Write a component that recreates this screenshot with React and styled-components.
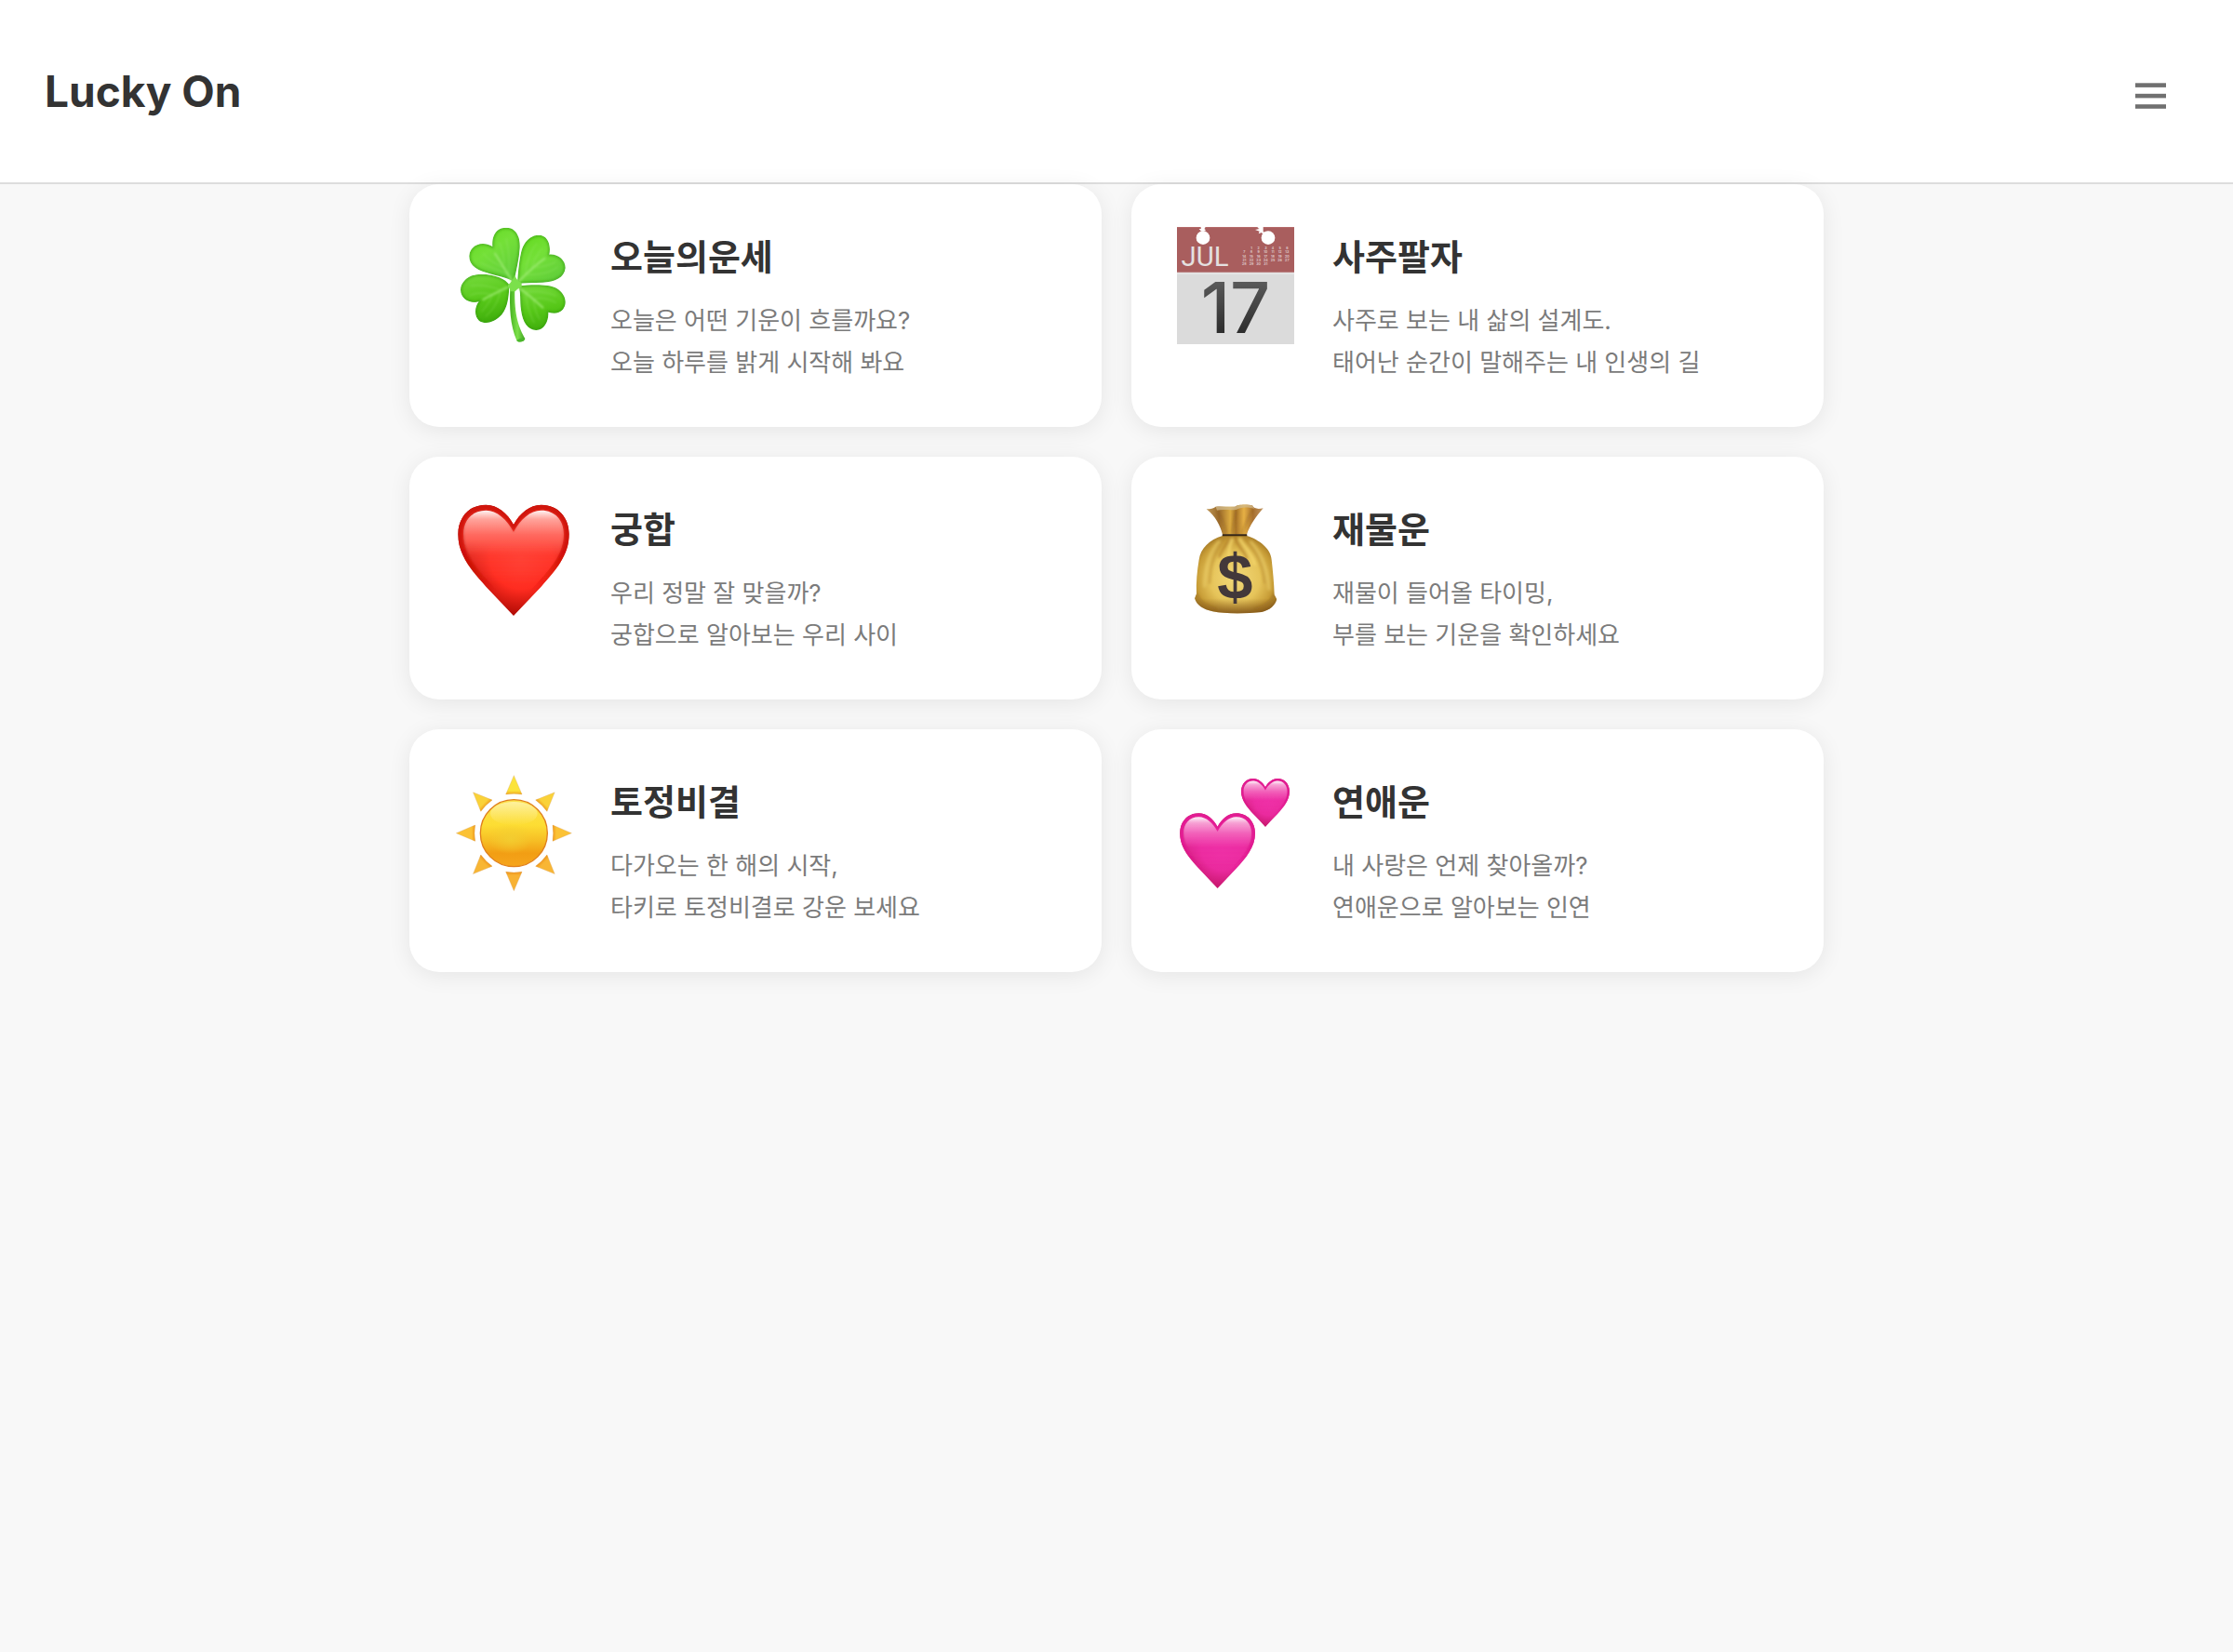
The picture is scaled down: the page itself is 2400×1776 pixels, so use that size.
import React, { useId } from "react";
import styled, { createGlobalStyle } from "styled-components";

const GlobalStyle = createGlobalStyle`
  *, *::before, *::after { box-sizing: border-box; }
  body {
    margin: 0;
    background: #f8f8f8;
    color: #333;
    font-family: Inter, "Noto Sans CJK KR", sans-serif;
  }
`;

const Header = styled.header`
  display: flex;
  align-items: center;
  justify-content: space-between;
  padding: 68px 48px;
  background: #fff;
  border-bottom: 2px solid #ddd;
`;

const Logo = styled.h1`
  margin: 0;
  font-size: 46px;
  font-weight: 700;
  line-height: 60px;
`;

const MenuButton = styled.button`
  display: flex;
  padding: 16px 24px 6px;
  border: 0;
  background: none;
  color: #707070;
  cursor: pointer;
`;

const Grid = styled.main`
  display: grid;
  grid-template-columns: repeat(2, minmax(0, 1fr));
  gap: 32px;
  max-width: 1520px;
  margin: 0 auto;
  padding-bottom: 48px;
`;

const Card = styled.a`
  display: flex;
  align-items: flex-start;
  gap: 40px;
  padding: 44px 48px 47px;
  border-radius: 32px;
  background: #fff;
  box-shadow: 0 4px 24px rgba(0, 0, 0, 0.08);
  color: inherit;
  text-decoration: none;
`;

const Picture = styled.svg`
  flex: none;
  width: 128px;
  height: 128px;
  overflow: visible;
`;

const CardText = styled.div`
  display: flex;
  flex-direction: column;
  gap: 16px;
  padding-top: 4px;
`;

const CardTitle = styled.h2`
  margin: 0;
  font-size: 38px;
  font-weight: 700;
  line-height: 60px;
`;

const CardDescription = styled.p`
  margin: 0;
  color: #7b7b7b;
  font-size: 26px;
  line-height: 45px;
`;

const HEART =
  "M216 102C235 65 270 38 305 38C360 38 395 80 395 133C395 200 352 250 305 302C275 334 245 365 216 396C187 365 157 334 127 302C80 250 37 200 37 133C37 80 72 38 127 38C162 38 197 65 216 102Z";
const HEART_INNER =
  "M216 126C237 86 270 56 305 56C350 56 378 88 378 133C378 190 345 235 298 285C268 316 242 342 216 372C190 342 164 316 134 285C87 235 54 190 54 133C54 88 82 56 127 56C162 56 195 86 216 126Z";

function Heart({ colors, transform }) {
  const id = useId();
  const { core, body, rim, deep, shine } = colors;
  return (
    <g transform={transform}>
      <defs>
        <radialGradient id={`${id}b`} gradientUnits="userSpaceOnUse" cx="240" cy="210" r="200">
          <stop offset="0" stopColor={core} />
          <stop offset="0.5" stopColor={body} />
          <stop offset="1" stopColor={deep} />
        </radialGradient>
        <linearGradient id={`${id}t`} gradientUnits="userSpaceOnUse" x1="0" y1="56" x2="0" y2="290">
          <stop offset="0" stopColor={core} />
          <stop offset="0.4" stopColor={core} />
          <stop offset="1" stopColor={core} stopOpacity="0" />
        </linearGradient>
        <linearGradient id={`${id}s`} gradientUnits="userSpaceOnUse" x1="0" y1="56" x2="0" y2="200">
          <stop offset="0" stopColor="#fff" stopOpacity="0.95" />
          <stop offset="0.2" stopColor={shine} stopOpacity="0.85" />
          <stop offset="0.55" stopColor={shine} stopOpacity="0.35" />
          <stop offset="1" stopColor={shine} stopOpacity="0" />
        </linearGradient>
        <linearGradient id={`${id}r`} gradientUnits="userSpaceOnUse" x1="0" y1="38" x2="0" y2="320">
          <stop offset="0" stopColor={rim} />
          <stop offset="0.5" stopColor={rim} />
          <stop offset="1" stopColor={rim} stopOpacity="0" />
        </linearGradient>
        <clipPath id={`${id}c`}>
          <path d={HEART} />
        </clipPath>
        <filter id={`${id}f`}>
          <feGaussianBlur stdDeviation="2" />
        </filter>
        <filter id={`${id}g`}>
          <feGaussianBlur stdDeviation="5" />
        </filter>
      </defs>
      <path d={HEART} fill={`url(#${id}b)`} />
      <g clipPath={`url(#${id}c)`}>
        <path d={HEART} fill="none" stroke={`url(#${id}r)`} strokeWidth="34" filter={`url(#${id}f)`} />
        <path d={HEART_INNER} fill={`url(#${id}t)`} filter={`url(#${id}g)`} />
      </g>
      <path d={HEART_INNER} fill={`url(#${id}s)`} filter={`url(#${id}f)`} />
    </g>
  );
}

const RED = { core: "#ff4034", body: "#ff2c20", rim: "#d01208", deep: "#a30500", shine: "#ffb4ac" };
const PINK = { core: "#ee30a6", body: "#ea2a9e", rim: "#e21a92", deep: "#c01262", shine: "#f8b4dc" };

function RedHeartIcon() {
  return (
    <Picture viewBox="24 15 384 384" aria-hidden="true">
      <Heart colors={RED} />
    </Picture>
  );
}

function TwoHeartsIcon() {
  return (
    <Picture viewBox="42 24 384 384" aria-hidden="true">
      <Heart colors={PINK} transform="translate(29.5 137) scale(0.677)" />
      <Heart colors={PINK} transform="translate(236 34.5) scale(0.435)" />
    </Picture>
  );
}

const LEAVES = [
  { d: "M212 217C200 207 170 202 130 190C95 180 72 165 73 135C75 100 115 85 148 105C145 70 160 44 192 44C225 44 238 75 236 110C234 145 225 180 218 215Z", fill: "url(#leafTop)" },
  { d: "M228 224C230 200 232 160 240 125C248 90 270 68 298 68C325 68 338 100 331 131C360 128 384 150 383 175C380 205 350 220 310 221C280 222 250 222 228 225Z", fill: "url(#leafTop)" },
  { d: "M232 232C270 228 330 225 355 240C385 258 390 290 375 308C363 322 345 322 328 317C330 345 315 376 288 375C262 374 245 350 240 310C236 280 240 255 232 232Z", fill: "url(#leafLow)" },
  { d: "M202 228C190 210 160 195 110 194C70 195 45 220 45 245C46 275 75 290 104 283C90 300 88 330 105 345C125 358 155 350 178 325C198 300 200 265 202 240Z", fill: "url(#leafLow)" },
];

function CloverIcon() {
  return (
    <Picture viewBox="24 36 384 384" aria-hidden="true">
      <defs>
        <linearGradient id="leafTop" x1="0" y1="0" x2="0.6" y2="1">
          <stop offset="0" stopColor="#62da1c" />
          <stop offset="0.5" stopColor="#74e038" />
          <stop offset="1" stopColor="#62cf3a" />
        </linearGradient>
        <linearGradient id="leafLow" x1="0.3" y1="0" x2="0.5" y2="1">
          <stop offset="0" stopColor="#74da3a" />
          <stop offset="0.55" stopColor="#56c718" />
          <stop offset="1" stopColor="#40ae0c" />
        </linearGradient>
        <linearGradient id="stem" x1="0" y1="0" x2="1" y2="0">
          <stop offset="0" stopColor="#45b01f" />
          <stop offset="0.5" stopColor="#7ce04a" />
          <stop offset="1" stopColor="#3fa320" />
        </linearGradient>
        <filter id="leafSoft" x="-20%" y="-20%" width="140%" height="140%">
          <feGaussianBlur stdDeviation="4" />
        </filter>
        <filter id="veinSoft" x="-20%" y="-20%" width="140%" height="140%">
          <feGaussianBlur stdDeviation="2.5" />
        </filter>
        {LEAVES.map((leaf, i) => (
          <clipPath id={`leaf${i}`} key={leaf.d}>
            <path d={leaf.d} />
          </clipPath>
        ))}
      </defs>
      {LEAVES.map((leaf, i) => (
        <g key={leaf.d} clipPath={`url(#leaf${i})`}>
          <path d={leaf.d} fill={leaf.fill} />
          <path d={leaf.d} fill="none" stroke="#359a14" strokeOpacity="0.7" strokeWidth="8" filter="url(#leafSoft)" />
        </g>
      ))}
      <g fill="none" stroke="#a2ec78" strokeLinecap="round" filter="url(#veinSoft)">
        <g strokeWidth="7" strokeOpacity="0.7">
          <path d="M212 218C196 192 176 158 156 128" />
          <path d="M232 218C258 192 286 164 316 144" />
          <path d="M232 238C262 258 286 280 310 302" />
          <path d="M198 236C170 248 142 264 118 276" />
        </g>
        <g strokeWidth="3" strokeOpacity="0.38">
          <path d="M198 194C174 184 140 172 110 158M186 174C162 164 138 150 118 128M200 190C204 150 200 110 192 80M186 160C184 134 178 110 170 92" />
          <path d="M254 198C256 160 268 122 290 96M276 176C280 150 294 126 308 112M260 196C294 196 330 192 358 172M288 172C310 172 334 164 350 156" />
          <path d="M256 252C290 248 324 252 352 264M282 274C310 268 334 276 352 286M256 256C258 294 268 324 282 350M280 276C282 300 290 324 300 340" />
          <path d="M176 246C150 236 112 226 78 232M148 260C122 254 94 254 76 262M172 252C168 284 148 310 126 330M146 266C140 284 126 300 114 314" />
        </g>
      </g>
      <path d="M205 240C202 300 205 360 226 408C232 416 250 414 253 402C235 370 217 330 220 240Z" fill="url(#stem)" />
      <path d="M226 408C230 416 250 414 253 402C246 399 236 400 226 408Z" fill="#49b52a" />
      <path d="M198 228C208 224 216 206 220 196C224 210 230 218 242 222L242 236C230 238 226 246 220 250L205 250C204 244 204 238 198 236Z" fill="#7be04b" />
    </Picture>
  );
}

const JULY_WEEKS = [
  [null, 1, 2, 3, 4, 5, 6],
  [7, 8, 9, 10, 11, 12, 13],
  [14, 15, 16, 17, 18, 19, 20],
  [21, 22, 23, 24, 25, 26, 27],
  [28, 29, 30, 31],
];

const IconText = styled.text`
  font-family: ${(p) => p.$family || "Inter"}, sans-serif;
  font-size: ${(p) => p.$size}px;
  font-weight: ${(p) => p.$weight};
  text-anchor: middle;
`;

function CalendarIcon() {
  return (
    <Picture viewBox="42 36 384 384" aria-hidden="true">
      <defs>
        <linearGradient id="digits" x1="0" y1="0" x2="0" y2="1">
          <stop offset="0.2" stopColor="#5a5a5a" />
          <stop offset="0.9" stopColor="#262626" />
        </linearGradient>
      </defs>
      <rect x="45" y="42" width="378" height="147" fill="#a95e5e" />
      <rect x="45" y="42" width="378" height="3" fill="#b56a6a" />
      <rect x="45" y="186" width="378" height="4" fill="#b98080" />
      <rect x="45" y="190" width="378" height="230" fill="#dbdbdb" />
      <rect x="45" y="190" width="378" height="5" fill="#e4e4e4" />
      <g fill="#fff">
        <circle cx="129" cy="77" r="22" />
        <path d="M121 40H136V45L133 48L138 52L132 56H124L116 49L123 47Z" />
        <circle cx="339" cy="77" r="22" />
        <path d="M311 40H323V58L334 60L322 66L318 60L308 64L311 56L297 51L311 48L304 44Z" />
      </g>
      <IconText $family="Roboto" $size={88} $weight={400} x="135" y="168" fill="#e4e0e0">JUL</IconText>
      {JULY_WEEKS.map((week, row) =>
        week.map((day, col) =>
          day ? (
            <IconText key={day} $size={11} $weight={700} x={262 + col * 23} y={114 + row * 13} fill="#dcc4c4">
              {day}
            </IconText>
          ) : null
        )
      )}
      <IconText $size={227} $weight={500} x="234" y="383" fill="url(#digits)">17</IconText>
    </Picture>
  );
}

function MoneyBagIcon() {
  return (
    <Picture viewBox="42 15 384 384" aria-hidden="true">
      <defs>
        <radialGradient id="sack" gradientUnits="userSpaceOnUse" cx="232" cy="275" r="160">
          <stop offset="0" stopColor="#f2d878" />
          <stop offset="0.5" stopColor="#e6c45a" />
          <stop offset="0.78" stopColor="#c79c36" />
          <stop offset="1" stopColor="#8f641e" />
        </radialGradient>
        <linearGradient id="sackBase" x1="0" y1="0" x2="0" y2="1">
          <stop offset="0.8" stopColor="#7a4a12" stopOpacity="0" />
          <stop offset="1" stopColor="#6b3f10" stopOpacity="0.75" />
        </linearGradient>
        <linearGradient id="neck" x1="0" y1="0" x2="1" y2="0">
          <stop offset="0" stopColor="#c09858" />
          <stop offset="0.22" stopColor="#99692a" />
          <stop offset="0.42" stopColor="#dcab40" />
          <stop offset="0.52" stopColor="#a87428" />
          <stop offset="0.66" stopColor="#e6b044" />
          <stop offset="0.82" stopColor="#a87030" />
          <stop offset="1" stopColor="#c09460" />
        </linearGradient>
        <filter id="foldSoft" x="-30%" y="-30%" width="160%" height="160%">
          <feGaussianBlur stdDeviation="4" />
        </filter>
        <clipPath id="sackClip">
          <path d="M192 138H270C310 150 348 180 350 215C354 250 358 290 359 328L367 343C362 362 345 378 318 384C265 390 200 390 160 382C130 376 108 362 102 340L108 325C106 290 110 250 116 215C120 180 150 150 192 138Z" />
        </clipPath>
      </defs>
      <g clipPath="url(#sackClip)">
        <rect x="95" y="130" width="280" height="265" fill="url(#sack)" />
        <rect x="95" y="130" width="280" height="262" fill="url(#sackBase)" />
        <g fill="none" strokeLinecap="round" filter="url(#foldSoft)">
          <path d="M200 146C172 180 152 230 150 290M262 146C300 180 322 230 328 290" stroke="#b5852a" strokeWidth="8" strokeOpacity="0.5" />
          <path d="M220 142C208 162 190 180 182 205M232 142C238 170 262 186 270 210" stroke="#a87020" strokeWidth="8" strokeOpacity="0.6" />
          <path d="M180 156C150 190 136 240 134 300M284 158C312 190 338 240 342 310" stroke="#ecd06c" strokeWidth="9" strokeOpacity="0.6" />
          <path d="M222 150C214 170 212 180 212 200M248 148C258 170 284 190 296 230" stroke="#f6d86c" strokeWidth="9" strokeOpacity="0.85" />
          <path d="M108 326C120 350 140 366 170 374M360 326C346 352 326 366 296 374" stroke="#8a5a18" strokeWidth="6" strokeOpacity="0.4" />
        </g>
      </g>
      <path d="M140 52C154 52 162 50 170 44C190 42 214 46 232 44C240 36 272 36 288 40C292 52 308 52 323 49C300 76 280 104 270 134H192C184 104 170 76 140 52Z" fill="url(#neck)" />
      <path d="M170 44C190 42 214 46 232 44C240 36 272 36 288 40C290 46 292 50 298 52C276 44 250 44 236 54C214 56 190 52 174 56Z" fill="#d2bb8c" fillOpacity="0.75" />
      <path d="M174 58C192 82 200 106 204 132M236 56C232 84 224 108 222 132M290 52C274 80 262 104 256 132" fill="none" stroke="#85531a" strokeWidth="5" strokeOpacity="0.5" filter="url(#foldSoft)" />
      <rect x="191" y="133" width="80" height="6" rx="2" fill="#352413" />
      <IconText $family='"Liberation Sans"' $size={206} $weight={700} x="232" y="342" fill="#43383a">$</IconText>
    </Picture>
  );
}

const RAYS = [
  { angle: 0, color: "#fbe33a" },
  { angle: 45, color: "#fad238" },
  { angle: 90, color: "#fbc235" },
  { angle: 135, color: "#f8b634" },
  { angle: 180, color: "#f8b233" },
  { angle: 225, color: "#f8b634" },
  { angle: 270, color: "#fbc235" },
  { angle: 315, color: "#fad238" },
];

function SunIcon() {
  return (
    <Picture viewBox="24 24 384 384" aria-hidden="true">
      <defs>
        <linearGradient id="sunBody" x1="0" y1="0" x2="0" y2="1">
          <stop offset="0" stopColor="#fbe04c" />
          <stop offset="0.38" stopColor="#fddd33" />
          <stop offset="0.62" stopColor="#f6bd24" />
          <stop offset="0.8" stopColor="#f29e14" />
          <stop offset="1" stopColor="#f6a51c" />
        </linearGradient>
        <radialGradient id="sunGlow" cx="0.5" cy="0.5" r="0.5">
          <stop offset="0" stopColor="#f2cf32" stopOpacity="0.8" />
          <stop offset="1" stopColor="#f2cf32" stopOpacity="0" />
        </radialGradient>
        <linearGradient id="sunShine" x1="0" y1="0" x2="0" y2="1">
          <stop offset="0" stopColor="#fff6b4" stopOpacity="0.8" />
          <stop offset="1" stopColor="#fff09a" stopOpacity="0" />
        </linearGradient>
        <linearGradient id="rayBase" x1="0" y1="0" x2="0" y2="1">
          <stop offset="0.8" stopColor="#ee9016" stopOpacity="0" />
          <stop offset="1" stopColor="#e88412" stopOpacity="0.7" />
        </linearGradient>
      </defs>
      {RAYS.map(({ angle, color }) => (
        <g key={angle} transform={`rotate(${angle} 217 227)`}>
          <path d="M217 41L243 102Q217 98 191 102Z" fill={color} stroke="#d9a86c" strokeWidth="1" />
          <path d="M217 41L243 102Q217 98 191 102Z" fill="url(#rayBase)" />
        </g>
      ))}
      <circle cx="217" cy="227" r="108" fill="url(#sunBody)" stroke="#e07f1c" strokeWidth="4" />
      <ellipse cx="205" cy="245" rx="70" ry="50" fill="url(#sunGlow)" />
      <ellipse cx="217" cy="164" rx="76" ry="38" fill="url(#sunShine)" />
    </Picture>
  );
}

function MenuIcon() {
  return (
    <svg width="33" height="28" viewBox="0 0 33 28" fill="currentColor" aria-hidden="true">
      <rect y="0.3" width="33" height="4.6" />
      <rect y="11.8" width="33" height="4.6" />
      <rect y="23.2" width="33" height="4.6" />
    </svg>
  );
}

const FORTUNES = [
  { slug: "today", Icon: CloverIcon, title: "오늘의운세", lines: ["오늘은 어떤 기운이 흐를까요?", "오늘 하루를 밝게 시작해 봐요"] },
  { slug: "saju", Icon: CalendarIcon, title: "사주팔자", lines: ["사주로 보는 내 삶의 설계도.", "태어난 순간이 말해주는 내 인생의 길"] },
  { slug: "match", Icon: RedHeartIcon, title: "궁합", lines: ["우리 정말 잘 맞을까?", "궁합으로 알아보는 우리 사이"] },
  { slug: "wealth", Icon: MoneyBagIcon, title: "재물운", lines: ["재물이 들어올 타이밍,", "부를 보는 기운을 확인하세요"] },
  { slug: "tojeong", Icon: SunIcon, title: "토정비결", lines: ["다가오는 한 해의 시작,", "타키로 토정비결로 강운 보세요"] },
  { slug: "love", Icon: TwoHeartsIcon, title: "연애운", lines: ["내 사랑은 언제 찾아올까?", "연애운으로 알아보는 인연"] },
];

export default function App() {
  return (
    <>
      <GlobalStyle />
      <Header>
        <Logo>Lucky On</Logo>
        <MenuButton type="button" aria-label="메뉴">
          <MenuIcon />
        </MenuButton>
      </Header>
      <Grid>
        {FORTUNES.map(({ slug, Icon, title, lines }) => (
          <Card key={slug} href={`#${slug}`}>
            <Icon />
            <CardText>
              <CardTitle>{title}</CardTitle>
              <CardDescription>
                {lines[0]}
                <br />
                {lines[1]}
              </CardDescription>
            </CardText>
          </Card>
        ))}
      </Grid>
    </>
  );
}
